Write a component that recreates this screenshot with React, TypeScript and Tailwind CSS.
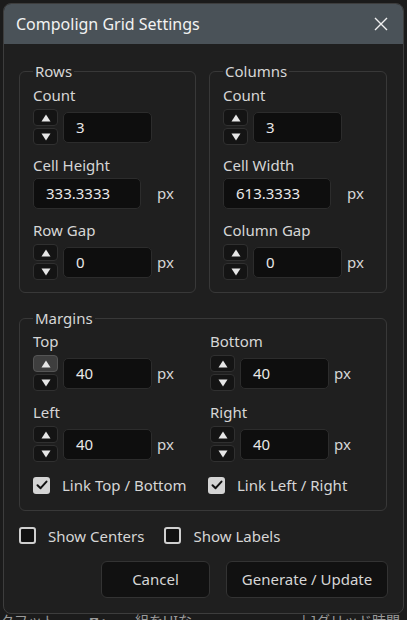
import React from "react";

const font = { fontFamily: '"Noto Sans", "Open Sans", sans-serif' };

function Arrow({ up }: { up?: boolean }) {
  return (
    <svg width="10" height="8" viewBox="0 0 10 8" aria-hidden>
      {up ? <polygon points="5,0.5 9.5,7.5 0.5,7.5" fill="#e6e6e6" /> : <polygon points="0.5,0.5 9.5,0.5 5,7.5" fill="#e6e6e6" />}
    </svg>
  );
}

function Spinner({ hot }: { hot?: boolean }) {
  return (
    <div className="flex w-[25px] flex-col gap-[2px]">
      <button
        className={
          hot
            ? "flex h-[17px] items-center justify-center rounded-[4px] border border-[#555] bg-[#3e3e3e]"
            : "flex h-[17px] items-center justify-center rounded-[4px] border border-[#303030] bg-[#141414]"
        }
      >
        <Arrow up />
      </button>
      <button className="flex h-[17px] items-center justify-center rounded-[4px] border border-[#303030] bg-[#141414]">
        <Arrow />
      </button>
    </div>
  );
}

function Field({ value, w = "w-[89px]" }: { value: string; w?: string }) {
  return (
    <div className={`flex h-[31px] ${w} items-center rounded-[5px] border border-[#2c2c2c] bg-[#0e0e0e] px-[12px] text-[15px] text-[#e8e8e8]`}>
      {value}
    </div>
  );
}

function SpinRow({ value, px, hot }: { value: string; px?: boolean; hot?: boolean }) {
  return (
    <div className="mt-[4px] flex items-center gap-[5px]">
      <Spinner hot={hot} />
      <Field value={value} />
      {px && <span className="text-[15px] text-[#d6d6d6]">px</span>}
    </div>
  );
}

function Label({ children, className = "" }: { children: React.ReactNode; className?: string }) {
  return <div className={`h-[20px] text-[15px] leading-[20px] text-[#d6d6d6] ${className}`}>{children}</div>;
}

function Check({ checked, label }: { checked?: boolean; label: string }) {
  return (
    <label className="flex items-center gap-[12px] text-[15px] text-[#d6d6d6]">
      {checked ? (
        <span className="flex h-[17px] w-[17px] items-center justify-center rounded-[3px] bg-[#d4d4d4]">
          <svg width="12" height="10" viewBox="0 0 12 10" aria-hidden>
            <path d="M1.5 5.2 4.6 8.2 10.5 1.6" fill="none" stroke="#111" strokeWidth="2" strokeLinecap="round" strokeLinejoin="round" />
          </svg>
        </span>
      ) : (
        <span className="h-[17px] w-[17px] rounded-[3px] border-2 border-[#cfcfcf] bg-[#111]" />
      )}
      {label}
    </label>
  );
}

function Group({ title, className = "", children }: { title: string; className?: string; children: React.ReactNode }) {
  return (
    <fieldset className={`rounded-[6px] border border-[#383838] px-[13px] ${className}`}>
      <legend className="px-[2px] text-[15px] leading-[20px] text-[#d6d6d6]">{title}</legend>
      {children}
    </fieldset>
  );
}

export default function App() {
  return (
    <div className="h-[620px] w-[407px] overflow-hidden bg-[#1b1b1b] pl-[3px] pt-[3px]" style={font}>
      <div className="flex h-[611px] w-[401px] flex-col overflow-hidden rounded-[8px] border border-[#3d3d3d] bg-[#1f1f1f]">
        <div className="flex h-[40px] shrink-0 items-center justify-between bg-[#4a5258] pl-[12px] pr-[15px]">
          <span className="text-[16px] text-[#f2f2f2]">Compolign Grid Settings</span>
          <svg width="14" height="14" viewBox="0 0 14 14" aria-hidden>
            <path d="M1 1 13 13M13 1 1 13" stroke="#f0f0f0" strokeWidth="1.4" />
          </svg>
        </div>

        <div className="flex flex-col px-[15px] pt-[17px]">
          <div className="flex gap-[13px]">
            <Group title="Rows" className="w-[177px] pb-[12px]">
              <Label className="mt-[4px]">Count</Label>
              <SpinRow value="3" />
              <Label className="mt-[10px]">Cell Height</Label>
              <div className="mt-[3px] flex items-center gap-[16px]">
                <Field value="333.3333" w="w-[108px]" />
                <span className="text-[15px] text-[#d6d6d6]">px</span>
              </div>
              <Label className="mt-[11px]">Row Gap</Label>
              <SpinRow value="0" px />
            </Group>
            <Group title="Columns" className="w-[178px] pb-[12px]">
              <Label className="mt-[4px]">Count</Label>
              <SpinRow value="3" />
              <Label className="mt-[10px]">Cell Width</Label>
              <div className="mt-[3px] flex items-center gap-[16px]">
                <Field value="613.3333" w="w-[108px]" />
                <span className="text-[15px] text-[#d6d6d6]">px</span>
              </div>
              <Label className="mt-[11px]">Column Gap</Label>
              <SpinRow value="0" px />
            </Group>
          </div>

          <Group title="Margins" className="mt-[15px] w-[368px] pb-[13px]">
            <div className="grid grid-cols-[177px_1fr]">
              <div>
                <Label className="mt-[3px]">Top</Label>
                <SpinRow value="40" px hot />
                <Label className="mt-[11px]">Left</Label>
                <SpinRow value="40" px />
              </div>
              <div>
                <Label className="mt-[3px]">Bottom</Label>
                <SpinRow value="40" px />
                <Label className="mt-[11px]">Right</Label>
                <SpinRow value="40" px />
              </div>
            </div>
            <div className="mt-[12px] grid grid-cols-[175px_1fr]">
              <Check checked label="Link Top / Bottom" />
              <Check checked label="Link Left / Right" />
            </div>
          </Group>

          <div className="mt-[14px] flex gap-[20px]">
            <Check label="Show Centers" />
            <Check label="Show Labels" />
          </div>

          <div className="mt-[14px] flex justify-end gap-[16px]">
            <button className="h-[37px] w-[109px] rounded-[6px] border border-[#333] bg-[#111] text-[15px] text-[#d6d6d6]">Cancel</button>
            <button className="h-[37px] w-[162px] rounded-[6px] border border-[#333] bg-[#111] text-[15px] text-[#d6d6d6]">Generate / Update</button>
          </div>
        </div>
      </div>
      <div className="-ml-[3px] flex h-[6px] items-start overflow-hidden whitespace-nowrap text-[14px] leading-[14px] text-[#9a9a9a]" style={{ fontFamily: '"Noto Sans", "Noto Sans CJK JP", sans-serif' }}>
        <span className="w-[90px]">タフット</span>
        <span className="w-[45px]">◘◖</span>
        <span className="w-[165px]">組をUIな</span>
        <span>| ]グリッド時間</span>
      </div>
    </div>
  );
}
